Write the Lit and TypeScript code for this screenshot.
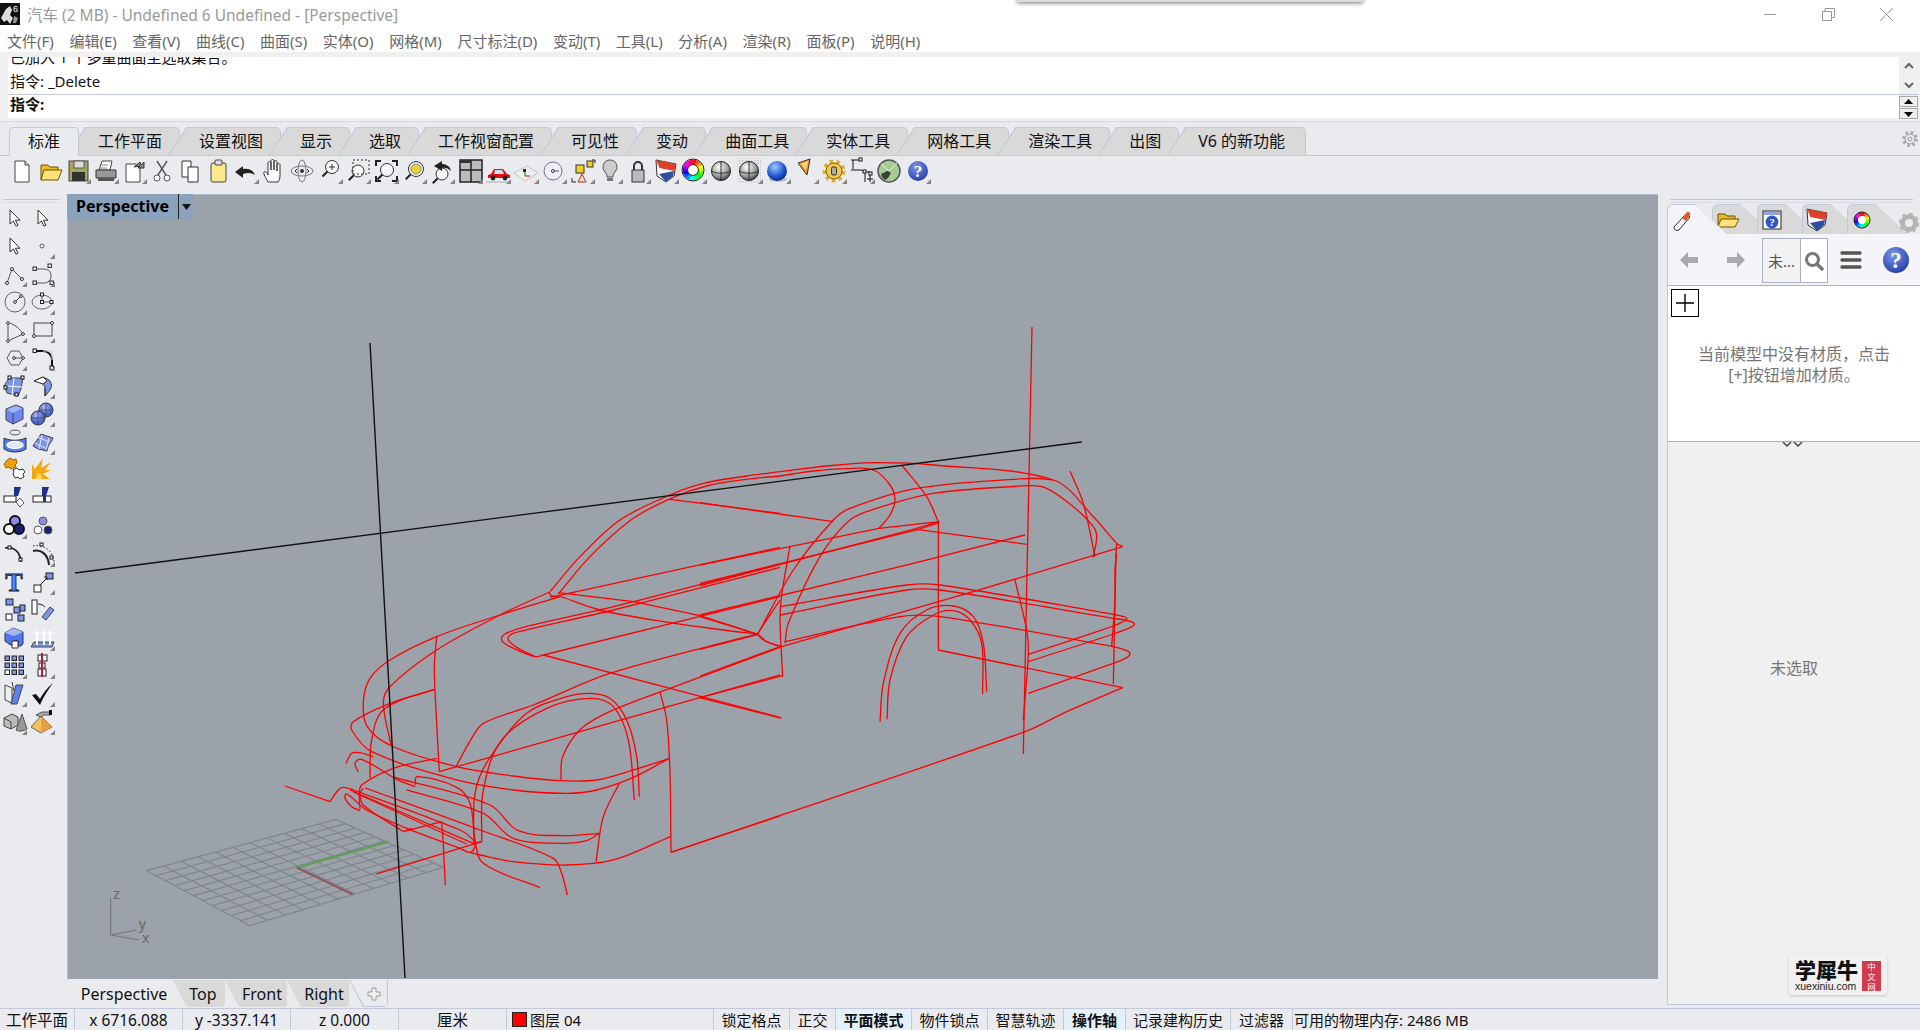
import { LitElement, html, css, svg } from "lit";
import { customElement } from "lit/decorators.js";

type P = [number, number];
const pts = (s: string): P[] => s.trim().split(/\s+/).map((p) => p.split(",").map(Number) as P);
// polyline
const ln = (s: string) => "M" + pts(s).map((p) => p.join(" ")).join("L");
// smooth curve: tangents follow neighbours, length follows the segment, so long straight runs do not overshoot
const sm = (s: string) => {
  const a = pts(s);
  let d = `M${a[0][0]} ${a[0][1]}`;
  const tan = (p: P, q: P) => {
    const dx = q[0] - p[0], dy = q[1] - p[1], l = Math.hypot(dx, dy) || 1;
    return [dx / l, dy / l];
  };
  for (let i = 0; i < a.length - 1; i++) {
    const p0 = a[Math.max(0, i - 1)], p1 = a[i], p2 = a[i + 1], p3 = a[Math.min(a.length - 1, i + 2)];
    const len = Math.hypot(p2[0] - p1[0], p2[1] - p1[1]) / 3;
    const t1 = tan(p0, p2), t2 = tan(p1, p3);
    d += `C${p1[0] + t1[0] * len} ${p1[1] + t1[1] * len} ${p2[0] - t2[0] * len} ${p2[1] - t2[1] * len} ${p2[0]} ${p2[1]}`;
  }
  return d;
};

const FRONT = [
  sm("810,455 900,350 1020,240 1170,165 1270,130 1400,108 1500,95"),
  sm("835,462 930,350 1060,235 1180,172 1280,138 1400,118 1500,108"),
  sm("808,456 812,466 838,472"),
  ln("1170,178 1500,220"),
  sm("840,470 660,525 470,590 330,660 270,715 250,785 262,860 335,918 530,980 700,1008 840,1022 950,1020 1060,990 1168,955"),
  sm("808,456 660,525 470,630 330,740 310,790 333,915"),
  ln("810,472 1500,322"),
  sm("838,468 960,510 1170,548 1330,570 1432,582"),
  ln("835,458 1060,485 1260,527 1432,582"),
  sm("1500,372 1000,500 730,562 675,582 665,600 690,620 765,650 790,645"),
  sm("1500,382 1000,510 730,572 690,585 685,600 710,622 765,650"),
  ln("790,645 1500,470"),
  ln("790,645 1500,832"),
  ln("1432,582 1500,480"),
  sm("1432,582 1450,600 1500,620"),
  sm("1432,582 990,700 760,795 610,850 575,895 528,980"),
  ln("478,995 900,875 1270,770 1500,705"),
  sm("470,590 463,680 470,850 478,995"),
  sm("470,955 340,985 245,1035 238,1060 240,1108"),
  sm("463,748 330,790 220,845 215,870 275,935 530,1020 700,1050 860,1060 950,1050 1060,1012 1168,955"),
  sm("463,748 312,808 275,900 270,1015"),
  sm("582,1210 585,1060 625,960 740,820 860,770 930,760 990,775 1040,840 1070,950 1078,1070"),
  sm("605,1205 610,1050 665,900 800,805 930,775 1000,800 1045,900 1063,1080"),
  ln("605,1205 290,1302"),
  ln("582,1210 605,1205"),
  sm("843,1022 848,950 905,865 1000,810 1170,745 1500,622"),
  sm("1140,755 1160,840 1170,1000 1173,1237"),
  ln("1173,1237 1500,1128"),
  sm("1172,1190 1000,1260 860,1275 700,1265 600,1245 572,1238"),
  ln("15,1038 150,1085"),
  sm("150,1085 175,1050 190,1042 220,1050 540,1170 575,1195 585,1218 570,1237 540,1225 380,1165 260,1110 200,1062 195,1075 215,1100 240,1112"),
  sm("250,1045 240,1060 250,1095 370,1175"),
  sm("256,1044 600,1170 820,1255 845,1300 862,1365"),
  sm("405,1035 412,1010 530,1042 570,1090 585,1200 610,1270 780,1343"),
  sm("380,1050 610,1120 700,1195 850,1210 920,1202 958,1180"),
  sm("345,1012 630,1095 715,1172 850,1187 958,1180"),
  sm("1018,1030 970,1130 948,1265"),
  sm("198,970 215,940 240,938 280,950"),
  sm("235,995 225,970 245,958 350,1018 405,1040"),
  ln("485,1145 490,1215 496,1335"),
  ln("485,1145 370,1175 395,1165"),
  ln("210,1050 580,1210"),
  ln("220,1056 560,1212"),
];
const REAR = [
  sm("240,155 380,138 520,128 700,135 1060,180 1180,290 1250,370 1268,380"),
  sm("240,168 340,153 440,146 520,150 570,195 585,240 570,285 537,325"),
  sm("605,135 680,230 715,305"),
  ln("718,305 537,325 0,435"),
  ln("718,308 650,330 0,490"),
  ln("718,305 650,325 0,497"),
  ln("650,328 980,373"),
  ln("0,248 400,305"),
  sm("172,645 280,450 400,300 450,265 650,205 990,175 1060,180"),
  sm("255,670 265,610 360,410 450,300 530,265 700,220 990,197 1040,205 1120,260 1180,320 1190,350 1180,412"),
  sm("1110,153 1150,250 1185,410"),
  sm("270,378 245,525 240,600 248,770"),
  ln("248,767 0,833 245,895"),
  ln("1268,380 820,515 245,680"),
  sm("240,560 620,495 720,495 1250,585 1275,591 1280,597 1265,607 1240,618 985,703"),
  sm("240,585 620,510 720,510 1240,595 1290,604 1303,612 1292,622 1240,642 985,725"),
  sm("255,665 600,590 720,590 1240,680 1280,692 1290,702 1275,716 1240,730 985,820"),
  sm("715,305 715,690"),
  ln("715,690 1268,803"),
  sm("1268,803 1100,875 970,937 -87,1297"),
  ln("1240,793 1248,400 1250,370"),
  sm("1235,680 1245,540 1245,450 1250,400"),
  sm("945,480 980,630 985,700 970,900"),
  sm("540,905 550,790 600,640 680,570 760,558 820,590 850,670 860,815"),
  sm("561,898 570,780 620,650 700,585 760,572 810,600 845,670 848,822"),
  sm("0,590 175,645 200,665 245,680"),
  ln("0,688 175,643"),
  ln("0,585 640,430 975,345"),
  ln("0,768 245,678"),
  ln("996,-279 970,1002"),
];

// grid plane, in zoom units
const gridLines = (() => {
  const A: P = [170, 272], B: P = [738, 118], C: P = [1060, 262], E: P = [480, 437];
  const lerp = (a: P, b: P, t: number): P => [a[0] + (b[0] - a[0]) * t, a[1] + (b[1] - a[1]) * t];
  const out: string[] = [];
  const n = 11;
  for (let i = 0; i <= n; i++) {
    const t = i / n;
    const a = lerp(A, B, t), b = lerp(E, C, t);
    out.push(`M${a[0]} ${a[1]}L${b[0]} ${b[1]}`);
    const c = lerp(A, E, t), d = lerp(B, C, t);
    out.push(`M${c[0]} ${c[1]}L${d[0]} ${d[1]}`);
  }
  return out;
})();

const wheel = (cx: number, cy: number, r: number, w: number) => {
  const n = 18;
  return Array.from({ length: n }, (_, i) => {
    const a0 = (i / n) * 2 * Math.PI - Math.PI / 2, a1 = ((i + 1.2) / n) * 2 * Math.PI - Math.PI / 2;
    return svg`<path d="M${cx + r * Math.cos(a0)} ${cy + r * Math.sin(a0)}L${cx + r * Math.cos(a1)} ${cy + r * Math.sin(a1)}" stroke="hsl(${(i / n) * 360} 100% 50%)" stroke-width="${w}" fill="none"/>`;
  });
};
const sphere = (id: string, c0: string, c1: string, c2: string) => svg`
  <defs><radialGradient id="${id}" cx=".4" cy=".3" r=".8"><stop offset="0" stop-color="${c0}"/><stop offset=".6" stop-color="${c1}"/><stop offset="1" stop-color="${c2}"/></radialGradient></defs>`;
const mag = (cx: number, cy: number, r: number) => svg`
  <circle cx="${cx}" cy="${cy}" r="${r}" fill="#f4f5f6" stroke="#333"/>
  <path d="M${cx - r * 0.7} ${cy + r * 0.7}L${cx - r * 0.7 - 5} ${cy + r * 0.7 + 5}" stroke="#222" stroke-width="2"/>`;
const shield = svg`<path d="M4 3l20 4-2 12-8 6-9-6z" fill="#fff" stroke="#333"/><path d="M4 3l20 4-1.5 7-15-3z" fill="#e0402a"/><path d="M7 17l15-3-1 5-7 6z" fill="#2d4fa0"/>`;
const help = svg`<defs><radialGradient id="hp" cx=".4" cy=".3" r=".8"><stop offset="0" stop-color="#7d96e6"/><stop offset="1" stop-color="#1f37a0"/></radialGradient></defs>
  <circle cx="14" cy="14" r="10" fill="url(#hp)"/><text x="14" y="20" text-anchor="middle" font-family="Liberation Serif" font-weight="700" font-size="17" fill="#fff">?</text>`;

const TOP: [any, boolean][] = [
  [svg`<path d="M7 4h10l4 4v17H7z" fill="#fff" stroke="#444"/><path d="M17 4v4h4" fill="#ddd" stroke="#444"/>`, false],
  [svg`<path d="M5 23V8h7l2 2h8v4" fill="#e8b923" stroke="#6b5200"/><path d="M5 23l3-10h18l-4 10z" fill="#ffe27a" stroke="#6b5200"/>`, false],
  [svg`<rect x="5" y="4" width="19" height="20" fill="#a8a45e" stroke="#444"/><rect x="10" y="4" width="10" height="7" fill="#ddd" stroke="#555"/><rect x="8" y="15" width="13" height="9" fill="#333"/>`, true],
  [svg`<path d="M10 4h10l-2 9H7z" fill="#fff" stroke="#444"/><path d="M4 13h20v8H4z" fill="#999" stroke="#333"/><path d="M6 21h16v3H6z" fill="#555"/><path d="M9 8h7M8 11h7" stroke="#888"/>`, true],
  [svg`<path d="M6 7h10l4 4v14H6z" fill="#fff" stroke="#444"/><path d="M14 10l6-5 1 3 3-3v6h-6l2-2z" fill="#888" stroke="#333"/>`, true],
  [svg`<circle cx="9" cy="21" r="3" fill="#fff" stroke="#555"/><circle cx="19" cy="21" r="3" fill="#fff" stroke="#555"/><path d="M10 18L19 4M18 18L9 4" stroke="#555" stroke-width="1.4"/>`, false],
  [svg`<path d="M6 4h9v16H6z" fill="#fff" stroke="#333"/><path d="M12 10h10v15H12z" fill="#fff" stroke="#333"/>`, false],
  [svg`<rect x="7" y="6" width="15" height="19" rx="2" fill="#fbe98f" stroke="#444"/><rect x="11" y="3" width="7" height="5" rx="1" fill="#ddd" stroke="#444"/>`, false],
  [svg`<path d="M3 15l8-6v3c6-1 10 1 12 6-3-2-7-3-12-1v4z" fill="#222"/>`, true],
  [svg`<path d="M8 25c-2-4-5-8-4-10 1-1 3 0 4 3V6c0-2 3-2 3 0v7-9c0-2 3-2 3 0v9-8c0-2 3-2 3 0v9-6c0-2 3-2 3 0v10c0 4-1 6-2 7z" fill="#fff" stroke="#333"/>`, false],
  [svg`<ellipse cx="14" cy="14" rx="11" ry="5" fill="none" stroke="#777"/><ellipse cx="14" cy="14" rx="4" ry="11" fill="none" stroke="#777"/><circle cx="14" cy="14" r="2" fill="#333"/><path d="M9 12l-2 2 2 2M19 12l2 2-2 2" stroke="#333" fill="none"/>`, false],
  [svg`${mag(16, 10, 6.5)}<path d="M13 10h6M16 7v6" stroke="#333"/>`, true],
  [svg`${mag(14, 14, 6)}<rect x="9" y="3" width="16" height="14" fill="none" stroke="#333" stroke-dasharray="2 2"/>`, true],
  [svg`${mag(15, 13, 6.5)}<path d="M4 9V4h5M20 4h5v5M4 19v5h5M25 19v5h-5" fill="none" stroke="#222" stroke-width="2"/>`, true],
  [svg`${mag(16, 12, 7.5)}<circle cx="16" cy="12" r="5" fill="#e8d23a" stroke="#888"/>`, true],
  [svg`${mag(14, 17, 6)}<path d="M6 9l8-5v3c4 0 8 2 9 7-3-3-6-4-9-3v3z" fill="#222"/>`, true],
  [svg`<rect x="4" y="3" width="22" height="22" fill="#bbb" stroke="#222" stroke-width="1.5"/><path d="M15 3v22M4 13h22" stroke="#222" stroke-width="1.5"/><path d="M4 3h11v3H4z" fill="#333"/>`, true],
  [svg`<path d="M4 18l3-1 3-5h9l4 5 3 1v3H4z" fill="#e01010"/><path d="M11 13h7l2 4h-10z" fill="#cfe0f0"/><circle cx="9" cy="21" r="2.4" fill="#222"/><circle cx="21" cy="21" r="2.4" fill="#222"/><path d="M2 25h24" stroke="#aaa"/>`, true],
  [svg`<path d="M2 16l13-7 11 7-13 8z" fill="#eee" stroke="#aaa" stroke-dasharray="1.5 1"/><path d="M13 14v5" stroke="#070"/><path d="M13 19h5" stroke="#d00"/><rect x="11" y="12" width="3" height="3" fill="#222"/>`, true],
  [svg`<circle cx="13" cy="14" r="9" fill="#eef" stroke="#777"/><path d="M13 14h6" stroke="#555"/><circle cx="13" cy="14" r="1.5" fill="#fff" stroke="#333"/>`, true],
  [svg`<path d="M14 17l-4 8h8z" fill="#f6e2c0" stroke="#a33"/><rect x="8" y="8" width="8" height="8" fill="#f0d020" stroke="#333"/><rect x="19" y="4" width="6" height="6" fill="#f0d020" stroke="#333"/><path d="M4 21v4h4M24 3h3v3" fill="none" stroke="#222"/>`, true],
  [svg`<path d="M14 3a7 7 0 0 1 5 12c-2 2-2 4-2 5h-6c0-1 0-3-2-5a7 7 0 0 1 5-12z" fill="#ccc" stroke="#555"/><path d="M11 21h6v3h-6z" fill="#777"/>`, true],
  [svg`<path d="M10 13V9a4 4 0 0 1 8 0v4" fill="none" stroke="#333" stroke-width="2"/><rect x="8" y="13" width="12" height="12" fill="#bbb" stroke="#333"/>`, true],
  [svg`${shield}`, true],
  [svg`${wheel(13, 13, 8, 5)}<circle cx="13" cy="13" r="11" fill="none" stroke="#222"/><circle cx="13" cy="13" r="5.4" fill="#fff" stroke="#222"/>`, true],
  [svg`${sphere("s1", "#fff", "#999", "#222")}<circle cx="13" cy="14" r="9.5" fill="url(#s1)" stroke="#222"/><path d="M13 4.5v19M3.5 14c5 3 14 3 19 0" stroke="#333" fill="none"/>`, false],
  [svg`<defs><pattern id="dp" width="3" height="3" patternUnits="userSpaceOnUse"><rect width="1.5" height="1.5" fill="#c4c4c8"/></pattern></defs><rect x="1" y="1" width="24" height="26" fill="url(#dp)"/>${sphere("s2", "#fff", "#999", "#222")}<circle cx="13" cy="14" r="9.5" fill="url(#s2)" stroke="#222"/><path d="M13 4.5v19M3.5 14c5 3 14 3 19 0" stroke="#333" fill="none"/>`, true],
  [svg`${sphere("s3", "#9fc8ff", "#1b55d0", "#061a60")}<ellipse cx="14" cy="22" rx="9" ry="3" fill="#bbb"/><circle cx="13" cy="14" r="10" fill="url(#s3)"/>`, true],
  [svg`<path d="M6 6l12-4-3 16z" fill="#f59b23" stroke="#333"/><path d="M9 7l7-3-2 9z" fill="#ffd37a"/>`, true],
  [svg`<circle cx="14" cy="14" r="9.5" fill="none" stroke="#e0b030" stroke-width="4" stroke-dasharray="3.6 3.1"/><circle cx="14" cy="14" r="8" fill="#f2c84a" stroke="#5a4500" stroke-width=".8"/><rect x="11.5" y="10" width="5" height="8" rx="1.5" fill="#aaa" stroke="#333"/>`, true],
  [svg`<path d="M3 3h10M5 3v9M3 13h10l4 2v10M17 15h5M22 15v10M19 22h6" fill="none" stroke="#111"/><rect x="11" y="1" width="3" height="3" fill="#fff" stroke="#111"/><rect x="15" y="13" width="3" height="3" fill="#fff" stroke="#111"/><rect x="21" y="15" width="3" height="3" fill="#fff" stroke="#111"/>`, true],
  [svg`<circle cx="13" cy="14" r="11" fill="#a6cc96" stroke="#555" stroke-width="1.5"/><path d="M5 17c3-1 5-3 7-3l3 2-3 5-3 2-3-3z" fill="#3a3f38"/><path d="M13 14L22 5M13 14l-8-7" stroke="#e4f2dc" stroke-width="1"/>`, false],
  [help, true],
];

const arrow = svg`<path d="M10 6v14l3.4-3 2.6 5.2 2-1-2.6-5h4.6z" fill="#fff" stroke="#333"/>`;
const blueSq = "#7d95e8";
const LEFT: [any, boolean][] = [
  [arrow, false], [arrow, false],
  [arrow, false], [svg`<circle cx="14" cy="14" r="2" fill="#fff" stroke="#555"/>`, true],
  [svg`<path d="M7 23L12 9l10 10" fill="none" stroke="#555"/><circle cx="7" cy="23" r="1.5" fill="#fff" stroke="#333"/><circle cx="12" cy="9" r="1.5" fill="#fff" stroke="#333"/><circle cx="22" cy="19" r="1.5" fill="#fff" stroke="#333"/>`, true],
  [svg`<path d="M7 9h8c6 0 8 3 8 7s-3 7-7 7H7" fill="none" stroke="#555"/><g fill="#fff" stroke="#222"><rect x="5" y="7" width="3.4" height="3.4"/><rect x="20" y="4" width="3.4" height="3.4"/><rect x="22" y="21" width="3.4" height="3.4"/><rect x="5" y="21" width="3.4" height="3.4"/></g>`, true],
  [svg`<circle cx="15" cy="14" r="10" fill="none" stroke="#666"/><path d="M15 14l6-6" stroke="#444"/><circle cx="15" cy="14" r="1.4" fill="#fff" stroke="#333"/><circle cx="21" cy="8" r="1.4" fill="#fff" stroke="#333"/>`, true],
  [svg`<ellipse cx="14" cy="14" rx="10" ry="7" fill="none" stroke="#666"/><path d="M14 6v8h10" stroke="#555" fill="none"/><g fill="#fff" stroke="#222"><rect x="12.5" y="5" width="3" height="3"/><rect x="12.5" y="12.5" width="3" height="3"/><rect x="22" y="12.5" width="3" height="3"/></g>`, true],
  [svg`<path d="M8 7v18l15-7c-3-5-8-10-15-11z" fill="none" stroke="#555"/><g fill="#fff" stroke="#333"><circle cx="8" cy="7" r="1.4"/><circle cx="8" cy="25" r="1.4"/><circle cx="23" cy="18" r="1.4"/></g>`, true],
  [svg`<rect x="6" y="7" width="18" height="13" fill="none" stroke="#444"/><circle cx="6" cy="20" r="1.5" fill="#fff" stroke="#333"/><circle cx="24" cy="7" r="1.5" fill="#fff" stroke="#333"/>`, true],
  [svg`<path d="M7 14l4-7h8l4 7-4 7h-8z" fill="none" stroke="#555"/><path d="M14 14h9" stroke="#555"/><circle cx="14" cy="14" r="1.4" fill="#fff" stroke="#333"/><circle cx="23" cy="14" r="1.4" fill="#fff" stroke="#333"/>`, true],
  [svg`<path d="M6 7h9c5 0 9 4 9 9v7" fill="none" stroke="#111" stroke-width="2"/><path d="M15 7h9v9" fill="none" stroke="#ccc"/><rect x="5" y="5" width="3.4" height="3.4" fill="#fff" stroke="#111"/><rect x="22" y="22" width="3.4" height="3.4" fill="#fff" stroke="#111"/>`, true],
  [svg`<path d="M9 6h14l-2 11-3 7-11-3-3-7z" fill="${blueSq}" stroke="#445"/><path d="M7 14l15 1M14 6l-2 17" stroke="#fff"/><g fill="#fff" stroke="#111"><rect x="8" y="4" width="3" height="3"/><rect x="21" y="4" width="3" height="3"/><rect x="4" y="14" width="3" height="3"/><rect x="15" y="21" width="3" height="3"/></g>`, true],
  [svg`<path d="M6 9l9-4 6 3c3 3 3 7 1 10l-5 6v-9c-1-3-6-5-11-6z" fill="${blueSq}" stroke="#333"/><path d="M6 9l9-4 4 4-4 3z" fill="#fff" stroke="#333"/><path d="M17 24v-8" stroke="#333"/>`, true],
  [svg`<path d="M6 9l10-4 7 3v11l-10 5-7-4z" fill="#6d87f0"/><path d="M6 9l7 4 10-5-7-3z" fill="#9fb3f5"/><path d="M13 13v11" stroke="#445"/><path d="M6 9l10-4 7 3v11l-10 5-7-4z" fill="none" stroke="#445"/>`, true],
  [svg`<defs><radialGradient id="bs" cx=".4" cy=".3"><stop offset="0" stop-color="#aebdf5"/><stop offset="1" stop-color="#4a63d8"/></radialGradient></defs><circle cx="18" cy="10" r="7" fill="url(#bs)" stroke="#333"/><circle cx="10" cy="18" r="7" fill="url(#bs)" stroke="#333"/><path d="M18 3v14M11 10h14M10 11v14M3 18h14" stroke="#445" stroke-width=".8"/>`, true],
  [svg`<ellipse cx="15" cy="4.5" rx="5" ry="2.4" fill="none" stroke="#555"/><path d="M4 10c6 3 15 3 22 0v11c-6 4-16 4-22 0z" fill="#4f7df0" stroke="#333"/><ellipse cx="15" cy="17" rx="8" ry="3.4" fill="#dfe6ff" stroke="#fff" stroke-width="1.5"/>`, false],
  [svg`<path d="M5 18l8-12 12 4c-1 4-5 6-6 13l-9-2z" fill="#7d95e8" stroke="#445"/><path d="M10 9l11 5M7 15l10 5M14 7l-3 14M21 10l-3 12" stroke="#fff" stroke-width=".8"/>`, true],
  [svg`<path d="M6 5l4-3 3 2 3-1 1 4-2 2 1 2-5 2-2-2-3 1-2-4 2-2z" fill="#f0a010" stroke="#a06000"/><path d="M13 14l4-2 2 2 4-1 2 3-2 2 1 3-4 2-2-2-3 1-2-4 1-2z" fill="#fff" stroke="#333"/>`, false],
  [svg`<path d="M4 23V8l3 5 8-11-2 10 10-6-6 8h6l-8 4 7 5z" fill="#f5a710"/><path d="M8 23l1-6 4 1 1 5z" fill="#ffd84d"/>`, false],
  [svg`<rect x="4" y="12" width="12" height="6" fill="#fff" stroke="#222"/><path d="M14 3h7l-3 9h-4z" fill="#1e3388"/><path d="M16 18l4-4 4 5-4 4z" fill="#fff" stroke="#555"/>`, false],
  [svg`<rect x="5" y="12" width="18" height="6" fill="#fff" stroke="#222"/><path d="M14 3h7l-3 9h-4z" fill="#1e3388"/><path d="M15 12h3v6h-3z" fill="#1e3388"/>`, false],
  [svg`<circle cx="15" cy="9" r="5" fill="#8b8ce8" stroke="#111" stroke-width="2"/><circle cx="9" cy="17" r="5" fill="#fff" stroke="#111" stroke-width="2"/><circle cx="19" cy="17" r="5" fill="#1c1f70" stroke="#111" stroke-width="2"/>`, true],
  [svg`<circle cx="15" cy="9" r="4" fill="#8b8ce8" stroke="#555"/><circle cx="10" cy="18" r="4" fill="#fff" stroke="#555"/><circle cx="20" cy="18" r="4" fill="#1c1f70" stroke="#555"/>`, false],
  [svg`<path d="M5 8c8-2 15 3 16 14" fill="none" stroke="#222" stroke-width="1.8"/><rect x="8" y="6" width="3" height="3" fill="#fff" stroke="#111"/><rect x="19" y="18" width="3" height="3" fill="#fff" stroke="#111"/>`, false],
  [svg`<path d="M5 11c8-2 15 3 16 14" fill="none" stroke="#222" stroke-width="2"/><path d="M5 6c10-2 20 4 21 16" fill="none" stroke="#222" stroke-dasharray="1.5 2"/><rect x="12" y="3" width="3" height="3" fill="#fff" stroke="#111"/><rect x="22" y="16" width="3" height="3" fill="#fff" stroke="#111"/>`, true],
  [svg`<text x="14" y="23" text-anchor="middle" font-family="Liberation Serif" font-weight="700" font-size="26" fill="#5a86f0" stroke="#111" stroke-width=".8">T</text>`, false],
  [svg`<rect x="6" y="17" width="7" height="7" fill="#fff" stroke="#222"/><rect x="18" y="5" width="7" height="6" fill="${blueSq}" stroke="#222"/><path d="M12 17l7-7" stroke="#222"/><path d="M16 9h3v3" fill="none" stroke="#222"/>`, true],
  [svg`<g stroke="#222"><rect x="6" y="3" width="7" height="6" fill="${blueSq}"/><rect x="14" y="11" width="6" height="6" fill="${blueSq}"/><rect x="20" y="9" width="5" height="6" fill="${blueSq}"/><rect x="6" y="18" width="6" height="6" fill="#fff"/><rect x="18" y="19" width="6" height="6" fill="${blueSq}"/></g>`, false],
  [svg`<rect x="4" y="4" width="5" height="14" fill="#fff" stroke="#222"/><path d="M14 21l8-10 4 3-8 10z" fill="${blueSq}" stroke="#445"/><path d="M10 8c3 0 5 1 7 3" fill="none" stroke="#222"/>`, false],
  [svg`<path d="M5 9l8-5 10 4v12l-2 2h-3v-5h-5v5l-4-2-4-3z" fill="#4f76ef" stroke="#334"/><path d="M5 9l8-5 10 4-9 4z" fill="#a5b8f5"/><path d="M12 17l6 0v7h-6z" fill="#fff" stroke="#333"/>`, false],
  [svg`<path d="M3 23l3-5h20l-2 5z" fill="#7d95e8" stroke="#445"/><g fill="none" stroke="#fff" stroke-width="2"><path d="M9 21V9M16 21V9M22 21V9"/></g><g fill="#fff"><path d="M6 10l3-4 3 4zM13 10l3-4 3 4zM19 10l3-4 3 4z"/></g>`, true],
  [svg`<g stroke="#222" fill="${blueSq}"><rect x="5" y="4" width="4.5" height="4.5"/><rect x="12" y="4" width="4.5" height="4.5"/><rect x="19" y="4" width="4.5" height="4.5"/><rect x="5" y="11" width="4.5" height="4.5"/><rect x="12" y="11" width="4.5" height="4.5"/><rect x="19" y="11" width="4.5" height="4.5"/><rect x="5" y="18" width="4.5" height="4.5" fill="#fff"/><rect x="12" y="18" width="4.5" height="4.5"/><rect x="19" y="18" width="4.5" height="4.5"/></g>`, true],
  [svg`<g fill="#fff" stroke="#222"><rect x="10" y="3" width="9" height="6"/><rect x="11" y="11" width="6" height="5"/><rect x="10" y="17" width="8" height="7"/></g><path d="M14 1v24" stroke="#b02030" stroke-width="2"/>`, true],
  [svg`<path d="M5 5l7 3v15l-7-3z" fill="#eee" stroke="#444"/><path d="M16 5h7l-6 19h-6z" fill="#5a86e8" stroke="#445"/><path d="M12 2l2 9" stroke="#444"/>`, true],
  [svg`<path d="M4 15l4-1 4 5C15 13 19 8 25 3 20 10 15 17 12 25z" fill="#111"/>`, true],
  [svg`<path d="M4 10l8-4 6 3v8l-7 4-7-3z" fill="#bbb" stroke="#444"/><path d="M16 22l6-16 5 15c-3 2-8 3-11 1z" fill="#999" stroke="#555"/><path d="M4 10l7 4v7" fill="none" stroke="#444"/>`, true],
  [svg`<path d="M3 19l10-11 11 11-11 6z" fill="#f8c060" stroke="#666"/><path d="M13 8l11 11-11 6z" fill="#e8a040"/><path d="M8 7l6-3h8v3h-6l-3 2z" fill="#aaa" stroke="#555"/><rect x="21" y="2" width="3" height="5" fill="#111"/>`, true],
];

const MENU = ["文件(F)", "编辑(E)", "查看(V)", "曲线(C)", "曲面(S)", "实体(O)", "网格(M)", "尺寸标注(D)", "变动(T)", "工具(L)", "分析(A)", "渲染(R)", "面板(P)", "说明(H)"];
const TABS = ["工作平面", "设置视图", "显示", "选取", "工作视窗配置", "可见性", "变动", "曲面工具", "实体工具", "网格工具", "渲染工具", "出图", "V6 的新功能"];
const STATUS: { t: string; w: number; on?: boolean }[] = [
  { t: "锁定格点", w: 76 }, { t: "正交", w: 46 }, { t: "平面模式", w: 76, on: true }, { t: "物件锁点", w: 76 },
  { t: "智慧轨迹", w: 76 }, { t: "操作轴", w: 62, on: true }, { t: "记录建构历史", w: 105 }, { t: "过滤器", w: 62 },
];
const COORDS: { t: string; w: number }[] = [
  { t: "工作平面", w: 75 }, { t: "x 6716.088", w: 108 }, { t: "y -3337.141", w: 108 }, { t: "z 0.000", w: 108 }, { t: "厘米", w: 108 },
];

const gearOutline = svg`<circle cx="14" cy="14" r="6" fill="none" stroke="#aaa" stroke-width="4" stroke-dasharray="2.2 2.5"/><circle cx="14" cy="14" r="5" fill="#eaebef" stroke="#999"/><circle cx="14" cy="14" r="2" fill="none" stroke="#999"/>`;
const PANEL_TABS = [
  svg`<path d="M6 21l12-13 4 3-11 13c-3 1-5 0-5-3z" fill="#f4f4f4" stroke="#333"/><path d="M14 12l5-6c1-1 4 1 3 3l-4 6z" fill="#e2562c"/>`,
  svg`<path d="M5 21V8h7l2 2h8v3" fill="#e8b923" stroke="#6b5200"/><path d="M5 21l3-8h18l-4 8z" fill="#ffe27a" stroke="#6b5200"/>`,
  svg`<rect x="5" y="5" width="18" height="18" fill="#fff" stroke="#222"/><rect x="6" y="6" width="16" height="3" fill="#8fa4d8"/><circle cx="14" cy="16" r="6.4" fill="#2f56c4"/><text x="14" y="20" text-anchor="middle" font-family="Liberation Serif" font-weight="700" font-size="11" fill="#fff">?</text>`,
  shield,
  svg`${wheel(14, 14, 6, 4)}<circle cx="14" cy="14" r="8" fill="none" stroke="#222"/><circle cx="14" cy="14" r="4" fill="#fff"/>`,
];

@customElement("app-root")
export class AppRoot extends LitElement {
  static styles = css`
    :host {
      display: flex; flex-direction: column; width: 1920px; height: 1030px; overflow: hidden;
      background: #eaebef; color: #111; position: relative;
      font-family: "Noto Sans", "Noto Sans CJK SC", sans-serif; font-size: 15px;
    }
    svg { display: block; }
    .ic { width: 28px; height: 28px; flex: none; }
    .title { height: 28px; background: #fff; display: flex; align-items: center; flex: none; position: relative; }
    .logo { width: 20px; height: 22px; margin-right: 7px; }
    .title-text { color: #9a9a9a; font-size: 15.5px; }
    .winbtns { margin-left: auto; display: flex; gap: 43px; padding-right: 26px; }
    .winbtns svg { width: 15px; height: 15px; }
    .shade { position: absolute; left: 1017px; top: -4px; width: 346px; height: 6px; background: #ddd; box-shadow: 0 1px 4px rgba(0,0,0,.55); }
    .menu { height: 24px; background: #fff; display: flex; align-items: center; gap: 15.6px; padding-left: 7px; color: #666; flex: none; font-size: 15px; }
    .cmd { flex: none; height: 69px; background: #f0f0f0; padding-top: 5px; box-sizing: border-box; padding-bottom: 0; position: relative; }
    .hist { height: 37px; box-sizing: border-box; margin-left: 8px; margin-right: 21px; background: #fff; overflow: hidden; display: flex; flex-direction: column; justify-content: flex-end; padding: 0 0 1px 2px; line-height: 24px; }
    .sep { height: 1px; background: #c3c8da; margin-left: 8px; margin-right: 2px; }
    .input { height: 23px; margin-left: 8px; margin-right: 21px; background: #fff; padding-left: 2px; line-height: 19px; font-weight: 700; }
    .scr { position: absolute; right: 2px; width: 19px; display: flex; flex-direction: column; align-items: center; }
    .scr.a { top: 5px; height: 37px; background: #f0f0f0; justify-content: space-around; }
    .scr.b { top: 43px; gap: 1px; padding-top: 1px; }
    .scr.a svg { width: 10px; height: 8px; }
    .spin { width: 17px; height: 9px; border: 1px solid #aaa; display: flex; align-items: center; justify-content: center; background: #eee; }
    .spin svg { width: 9px; height: 6px; }
    .strip { flex: none; height: 35px; box-sizing: border-box; border-top: 1px solid #d4d7e4; border-bottom: 1px solid #c3c8da; padding: 5px 0 0 9px; display: flex; position: relative; }
    .tab { position: relative; height: 28px; box-sizing: border-box; padding: 0 18px 2px 31px; margin-left: -12px; display: flex; align-items: center; font-size: 16px; color: #111; white-space: nowrap; }
    .tab:last-of-type { padding-right: 21px; }
    .tab::before, .tab::after { content: ""; position: absolute; clip-path: polygon(18px 0, 100% 0, 100% 100%, 0 100%); }
    .tab::before { inset: 0; background: #c3c8da; border-top-right-radius: 5px; }
    .tab::after { inset: 1px 1px 0 1px; background: #d9d9d9; border-top-right-radius: 4px; }
    .tab span { position: relative; z-index: 1; }
    .tab.on { z-index: 5; margin-left: 0; padding: 0 19px 3px; height: 29px; }
    .tab.on::before { clip-path: none; border-top-left-radius: 5px; }
    .tab.on::after { clip-path: none; background: #eaebef; inset: 1px 1px 0 1px; border-top-left-radius: 4px; }
    .strip-gear { margin-left: auto; margin-top: -2px; margin-right: -4px; }
    .toolbar { flex: none; height: 38px; box-sizing: border-box; padding: 1px 0 0 8px; display: flex; }
    .main { flex: none; height: 814px; display: flex; }
    .left { width: 67px; flex: none; box-sizing: border-box; padding-top: 5px; }
    .grip { height: 2px; margin: 0 7px 0 3px; border-top: 1px solid #c3c8da; border-bottom: 1px solid #d8dbe6; }
    .lgrid { display: grid; grid-template-columns: 28px 28px; grid-auto-rows: 28px; margin: 1px 0 0 0; }
    .center { width: 1591px; flex: none; display: flex; flex-direction: column; border-left: 0; }
    .view { height: 785px; background: #9ba2aa; position: relative; flex: none; box-shadow: inset 1px 1px 0 #b3bdd3; }
    .view svg.scene { position: absolute; inset: 0; width: 100%; height: 100%; }
    .vtitle { position: absolute; left: 0; top: 0; width: 126px; height: 25px; background: #8ba2bd; display: flex; align-items: center; box-sizing: border-box; padding: 0 0 2px 9px; font-weight: 700; font-size: 16px; color: #000; }
    .vtitle .drop { position: absolute; right: 0; top: 0; width: 14px; height: 25px; border-left: 1px solid #222; display: flex; align-items: center; justify-content: center; }
    .vtabs { flex: none; height: 27px; margin-top: 1px; display: flex; }
    .vtab { position: relative; height: 27px; display: flex; align-items: center; justify-content: center; font-size: 16px; box-sizing: border-box; }
    .vtab::before { content: ""; position: absolute; inset: 0; background: #d9d9d9; clip-path: polygon(0 0, 100% 0, 100% 100%, 14px 100%); border-bottom-right-radius: 4px; }
    .vtab.on::before { background: #eaebef; }
    .vtab.add::before { background: #c3c8da; }
    .vtab.add::after { content: ""; position: absolute; inset: 0 1px 1px 1px; background: #eaebef; clip-path: polygon(0 0, 100% 0, 100% 100%, 14px 100%); }
    .vtab span, .vtab svg { position: relative; z-index: 1; }
    .vt0 { width: 106px; padding-left: 8px; }
    .vt1 { width: 52px; padding-left: 8px; }
    .vt2, .vt3 { width: 62px; padding-left: 12px; }
    .vt4 { width: 39px; padding-left: 10px; }
    .right { margin-left: 9px; width: 253px; flex: none; box-sizing: border-box; padding-top: 5px; display: flex; flex-direction: column; height: 811px; }
    .rtabs { display: flex; height: 30px; margin-top: 1px; position: relative; flex: none; }
    .rtab { width: 60px; height: 30px; margin-right: -15px; position: relative; padding-left: 1px; box-sizing: border-box; flex: none; }
    .rtab::before, .rtab::after { content: ""; position: absolute; clip-path: polygon(0 0, 47% 0, 100% 100%, 0 100%); }
    .rtab::before { inset: 0; background: #c3c8da; border-top-left-radius: 6px; }
    .rtab::after { inset: 1px 0 0 1px; background: #d9d9d9; border-top-left-radius: 5px; }
    .rtab.on { z-index: 5; }
    .rtab.on::after { background: #f3f4f8; }
    .rtab .ic { position: relative; z-index: 1; margin-top: 2px; }
    .rgear { position: absolute; right: -3px; top: 5px; }
    .rbody { flex: 1; border-left: 1px solid #c3c8da; border-bottom: 1px solid #c3c8da; display: flex; flex-direction: column; position: relative; background: #f0f0f0; }
    .rtools { height: 52px; flex: none; background: #f5f5f9; border-bottom: 1px solid #a8b0c4; display: flex; align-items: center; box-sizing: border-box; position: relative; }
    .rtools .slot { position: absolute; top: 50%; transform: translate(-50%, -50%); }
    .slot.s1 { left: 21px; } .slot.s2 { left: 68px; } .slot.s3 { left: 183px; } .slot.s4 { left: 228px; }
    .search { position: absolute; left: 94px; top: 4px; height: 45px; width: 66px; box-sizing: border-box; border: 1px solid #a8b0c4; display: flex; }
    .search .q { width: 37px; background: #f2f2f2; border-right: 1px solid #a8b0c4; display: flex; align-items: center; justify-content: center; font-size: 15px; color: #555; }
    .search .g { flex: 1; background: #fff; display: flex; align-items: center; justify-content: center; }
    .rmat { height: 156px; flex: none; background: #fff; border-bottom: 1px solid #a8b0c4; position: relative; box-sizing: border-box; padding-top: 58px; text-align: center; color: #777; font-size: 16px; line-height: 21px; }
    .plus { position: absolute; left: 3px; top: 3px; width: 28px; height: 28px; box-sizing: border-box; border: 1px solid #000; display: flex; align-items: center; justify-content: center; background: #fff; }
    .chev { flex: none; display: flex; justify-content: center; gap: 1px; height: 8px; margin-top: -1px; padding-right: 4px; }
    .chev svg { width: 10px; height: 7px; }
    .none { flex: 1; display: flex; align-items: center; justify-content: center; color: #777; font-size: 16px; padding-bottom: 120px; }
    .mark { position: absolute; right: 33px; bottom: 9px; width: 98px; height: 41px; background: #f0f0f0; border-radius: 3px; box-shadow: 0 1px 3px rgba(0,0,0,.18); display: flex; align-items: center; box-sizing: border-box; padding-left: 6px; }
    .mark .cn { font-weight: 900; font-size: 21px; line-height: 24px; color: #111; font-family: "Noto Sans CJK SC", sans-serif; white-space: nowrap; }
    .mark .en { font-size: 10.5px; line-height: 11px; color: #222; font-family: "Liberation Sans", sans-serif; }
    .mark .red { position: absolute; left: 73px; top: 7px; width: 19px; height: 30px; background: #d13a4f; color: #fff; font-size: 8.5px; line-height: 10px; text-align: center; font-family: "Noto Sans CJK SC", sans-serif; }
    .status { flex: none; height: 22px; border-top: 1px solid #c3c8da; box-sizing: border-box; display: flex; align-items: center; font-size: 15px; white-space: nowrap; }
    .cell { height: 21px; display: flex; align-items: center; justify-content: center; box-sizing: border-box; border-right: 1px solid #c3c8da; flex: none; }
    .cell.coord { font-size: 15.5px; }
    .cell.on { background: #e3f1fb; font-weight: 700; }
    .cell.layer { width: 207px; justify-content: flex-start; padding-left: 5px; gap: 3px; border-right: 1px solid #c3c8da; }
    .swatch { width: 13px; height: 13px; background: #f00; border: 1px solid #222; }
    .mem { padding-left: 1px; }
  `;

  private flyout(inner: any, tri: boolean) {
    return html`<svg class="ic" viewBox="0 0 28 28">${inner}${tri ? svg`<path d="M27 22v5h-5z" fill="#858585"/>` : ""}</svg>`;
  }

  render() {
    return html`
      <div class="title">
        <div class="shade"></div>
        <svg class="logo" viewBox="0 0 20 22"><rect width="20" height="22" fill="#111"/><path d="M1 15l5-9 4-3 2 4-2 5 3 3-3 6-3-4-3 2z" fill="#ddd"/><path d="M14 13l4 2-2 5h-3z" fill="#999"/><text x="13" y="9" font-family="Liberation Sans" font-size="9" fill="#fff">6</text></svg>
        <span class="title-text">汽车 (2 MB) - Undefined 6 Undefined - [Perspective]</span>
        <div class="winbtns">
          <svg viewBox="0 0 15 15"><path d="M1 7.5h12" stroke="#999"/></svg>
          <svg viewBox="0 0 15 15"><path d="M1.5 4.5h9v9h-9zM4 4.5v-3h9.5v9h-3" fill="none" stroke="#999"/></svg>
          <svg viewBox="0 0 15 15"><path d="M1 1l13 13M14 1L1 14" stroke="#999"/></svg>
        </div>
      </div>
      <div class="menu">${MENU.map((m) => html`<span>${m}</span>`)}</div>
      <div class="cmd">
        <div class="hist"><div>已加入 1 个多重曲面至选取集合。</div><div>指令: _Delete</div></div>
        <div class="sep"></div>
        <div class="input">指令:</div>
        <div class="scr a">
          <svg viewBox="0 0 10 8"><path d="M1 6l4-4 4 4" fill="none" stroke="#666" stroke-width="2"/></svg>
          <svg viewBox="0 0 10 8"><path d="M1 2l4 4 4-4" fill="none" stroke="#666" stroke-width="2"/></svg>
        </div>
        <div class="scr b">
          <div class="spin"><svg viewBox="0 0 9 6"><path d="M0 5h9L4.5 0z"/></svg></div>
          <div class="spin"><svg viewBox="0 0 9 6"><path d="M0 1h9L4.5 6z"/></svg></div>
        </div>
      </div>
      <div class="strip">
        <div class="tab on"><span>标准</span></div>
        ${TABS.map((t) => html`<div class="tab"><span>${t}</span></div>`)}
        <svg class="ic strip-gear" viewBox="0 0 28 28">${gearOutline}</svg>
      </div>
      <div class="toolbar">${TOP.map(([i, t]) => this.flyout(i, t))}</div>
      <div class="main">
        <div class="left">
          <div class="grip"></div>
          <div class="lgrid">${LEFT.map(([i, t]) => this.flyout(i, t))}</div>
        </div>
        <div class="center">
          <div class="view">
            <svg class="scene" viewBox="67 194 1591 785" fill="none">
              <g transform="translate(90 780) scale(.33333)" fill="none">
                ${gridLines.map((d) => svg`<path d=${d} stroke="#80868d" stroke-width="1.2" vector-effect="non-scaling-stroke"/>`)}
                <path d="M620 263L895 185" stroke="#5aa04e" stroke-width="2" vector-effect="non-scaling-stroke"/>
                <path d="M620 263L788 343" stroke="#8f5752" stroke-width="2" vector-effect="non-scaling-stroke"/>
                <g stroke="#777" stroke-width="1.2">
                  <path d="M62 465V355M62 465L140 450M62 465L148 480" vector-effect="non-scaling-stroke"/>
                </g>
                <g fill="#666" font-family="Noto Sans" font-size="42">
                  <text x="70" y="358">z</text><text x="146" y="446">y</text><text x="156" y="488">x</text>
                </g>
              </g>
              <g transform="translate(280 440) scale(.33333)" stroke="#f00">
                ${FRONT.map((d) => svg`<path d=${d} stroke-width="1.3" vector-effect="non-scaling-stroke"/>`)}
              </g>
              <g transform="translate(700 420) scale(.33333)" stroke="#f00">
                ${REAR.map((d) => svg`<path d=${d} stroke-width="1.3" vector-effect="non-scaling-stroke"/>`)}
              </g>
              <path d="M370 343L405 978M75 573L1081.7 442" stroke="#111" stroke-width="1.4"/>
            </svg>
            <div class="vtitle">Perspective
              <div class="drop"><svg width="9" height="6" viewBox="0 0 9 6"><path d="M0 0h9L4.5 6z" fill="#111"/></svg></div>
            </div>
          </div>
          <div class="vtabs">
            <div class="vtab vt0 on"><span>Perspective</span></div>
            <div class="vtab vt1"><span>Top</span></div>
            <div class="vtab vt2"><span>Front</span></div>
            <div class="vtab vt3"><span>Right</span></div>
            <div class="vtab vt4 add"><svg width="14" height="14" viewBox="0 0 14 14"><path d="M5 1h4v4h4v4H9v4H5V9H1V5h4z" fill="#f2f3f6" stroke="#999"/></svg></div>
          </div>
        </div>
        <div class="right">
          <div class="grip"></div>
          <div class="rtabs">
            ${PANEL_TABS.map((p, i) => html`<div class="rtab ${i === 0 ? "on" : ""}"><svg class="ic" viewBox="0 0 28 28">${p}</svg></div>`)}
            <svg class="ic rgear" viewBox="0 0 28 28"><circle cx="14" cy="14" r="6.5" fill="none" stroke="#b5b5b5" stroke-width="5"/><circle cx="14" cy="14" r="8.5" fill="none" stroke="#b5b5b5" stroke-width="3.5" stroke-dasharray="3 3.67"/></svg>
          </div>
          <div class="rbody">
            <div class="rtools">
              <div class="slot s1"><svg width="22" height="20" viewBox="0 0 22 20"><path d="M10 2L2 10l8 8v-5h10V7H10z" fill="#a8a8ae"/></svg></div>
              <div class="slot s2"><svg width="22" height="20" viewBox="0 0 22 20"><path d="M12 2l8 8-8 8v-5H2V7h10z" fill="#a8a8ae"/></svg></div>
              <div class="search">
                <div class="q">未...</div>
                <div class="g"><svg width="22" height="22" viewBox="0 0 22 22"><circle cx="9.5" cy="9.5" r="6" fill="none" stroke="#777" stroke-width="3"/><path d="M14 14l6 6" stroke="#777" stroke-width="3.4"/></svg></div>
              </div>
              <div class="slot s3"><svg width="22" height="20" viewBox="0 0 22 20"><path d="M2 3h18M2 10h18M2 17h18" stroke="#555" stroke-width="3.4" stroke-linecap="round"/></svg></div>
              <div class="slot s4"><svg class="ic" viewBox="0 0 28 28"><defs><radialGradient id="hp2" cx=".4" cy=".3" r=".8"><stop offset="0" stop-color="#7d96e6"/><stop offset="1" stop-color="#1f37a0"/></radialGradient></defs><circle cx="14" cy="14" r="13" fill="url(#hp2)"/><text x="14" y="22" text-anchor="middle" font-family="Liberation Serif" font-weight="700" font-size="23" fill="#fff">?</text></svg></div>
            </div>
            <div class="rmat">
              <div class="plus"><svg width="18" height="18" viewBox="0 0 18 18"><path d="M9 0v18M0 9h18" stroke="#000" stroke-width="1.4"/></svg></div>
              当前模型中没有材质，点击<br />[+]按钮增加材质。
            </div>
            <div class="chev">
              <svg viewBox="0 0 10 7"><path d="M1 1l4 4 4-4" fill="none" stroke="#444" stroke-width="1.5"/></svg>
              <svg viewBox="0 0 10 7"><path d="M1 1l4 4 4-4" fill="none" stroke="#444" stroke-width="1.5"/></svg>
            </div>
            <div class="none">未选取</div>
            <div class="mark">
              <div><div class="cn">学犀牛</div><div class="en">xuexiniu.com</div></div>
              <div class="red">中<br />文<br />网</div>
            </div>
          </div>
        </div>
      </div>
      <div class="status">
        ${COORDS.map((c) => html`<div class="cell coord" style="width:${c.w}px">${c.t}</div>`)}
        <div class="cell layer"><span class="swatch"></span>图层 04</div>
        ${STATUS.map((c) => html`<div class="cell ${c.on ? "on" : ""}" style="width:${c.w}px">${c.t}</div>`)}
        <span class="mem">可用的物理内存: 2486 MB</span>
      </div>
    `;
  }
}
